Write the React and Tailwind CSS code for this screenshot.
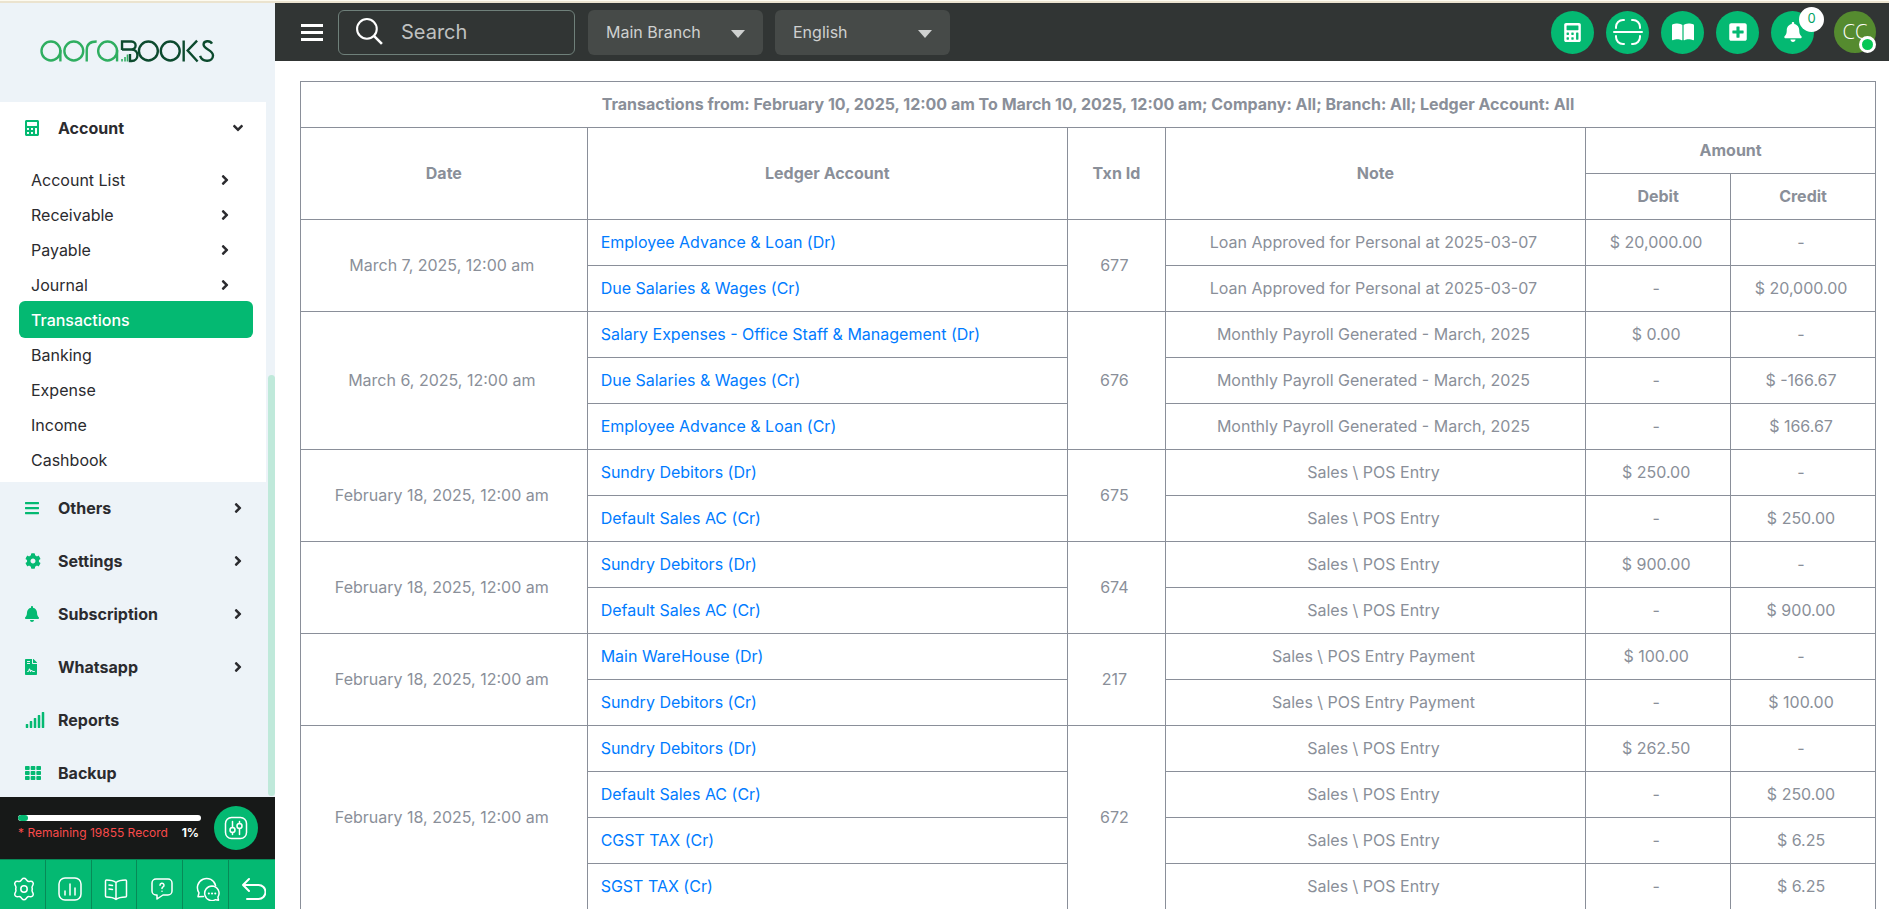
import { useState } from "react";
import {
  FaCalculator,
  FaBars,
  FaCog,
  FaBell,
  FaFileContract,
  FaSignal,
  FaTh,
  FaAngleRight,
  FaAngleDown,
  FaPlusSquare,
} from "react-icons/fa";
import { FaBookOpen } from "react-icons/fa6";

const accountLinks = [
  { label: "Account List", hasChildren: true },
  { label: "Receivable", hasChildren: true },
  { label: "Payable", hasChildren: true },
  { label: "Journal", hasChildren: true },
  { label: "Transactions" },
  { label: "Banking" },
  { label: "Expense" },
  { label: "Income" },
  { label: "Cashbook" },
];

const menuItems = [
  { label: "Others", icon: FaBars, hasChildren: true },
  { label: "Settings", icon: FaCog, hasChildren: true },
  { label: "Subscription", icon: FaBell, hasChildren: true },
  { label: "Whatsapp", icon: FaFileContract, hasChildren: true },
  { label: "Reports", icon: FaSignal, iconSize: 20 },
  { label: "Backup", icon: FaTh },
];

const payroll = "Monthly Payroll Generated - March, 2025";
const loan = "Loan Approved for Personal at 2025-03-07";
const pos = "Sales \\ POS Entry";
const posPayment = "Sales \\ POS Entry Payment";

const transactions = [
  {
    id: "677",
    date: "March 7, 2025, 12:00 am",
    entries: [
      ["Employee Advance & Loan (Dr)", loan, "$ 20,000.00", "-"],
      ["Due Salaries & Wages (Cr)", loan, "-", "$ 20,000.00"],
    ],
  },
  {
    id: "676",
    date: "March 6, 2025, 12:00 am",
    entries: [
      ["Salary Expenses - Office Staff & Management (Dr)", payroll, "$ 0.00", "-"],
      ["Due Salaries & Wages (Cr)", payroll, "-", "$ -166.67"],
      ["Employee Advance & Loan (Cr)", payroll, "-", "$ 166.67"],
    ],
  },
  {
    id: "675",
    date: "February 18, 2025, 12:00 am",
    entries: [
      ["Sundry Debitors (Dr)", pos, "$ 250.00", "-"],
      ["Default Sales AC (Cr)", pos, "-", "$ 250.00"],
    ],
  },
  {
    id: "674",
    date: "February 18, 2025, 12:00 am",
    entries: [
      ["Sundry Debitors (Dr)", pos, "$ 900.00", "-"],
      ["Default Sales AC (Cr)", pos, "-", "$ 900.00"],
    ],
  },
  {
    id: "217",
    date: "February 18, 2025, 12:00 am",
    entries: [
      ["Main WareHouse (Dr)", posPayment, "$ 100.00", "-"],
      ["Sundry Debitors (Cr)", posPayment, "-", "$ 100.00"],
    ],
  },
  {
    id: "672",
    date: "February 18, 2025, 12:00 am",
    entries: [
      ["Sundry Debitors (Dr)", pos, "$ 262.50", "-"],
      ["Default Sales AC (Cr)", pos, "-", "$ 250.00"],
      ["CGST TAX (Cr)", pos, "-", "$ 6.25"],
      ["SGST TAX (Cr)", pos, "-", "$ 6.25"],
    ],
  },
];

const LineIcon = ({ size = 24, children }) => (
  <svg
    width={size}
    height={size}
    viewBox="0 0 24 24"
    fill="none"
    stroke="currentColor"
    strokeWidth="1.5"
    strokeLinecap="round"
    strokeLinejoin="round"
    aria-hidden="true"
  >
    {children}
  </svg>
);

const Logo = () => (
  <svg width="175" height="24" viewBox="0 0 176 24" fill="none" strokeWidth="2.4" role="img" aria-label="aoraBOOKS">
    <g stroke="#2fae60">
      <circle cx="11" cy="12" r="9.5" />
      <path d="M20.500 11v11.500" />
      <circle cx="34" cy="12" r="9.5" />
      <path d="M47 22.500V11c0-5 3-8.500 10-8.500" />
      <circle cx="68" cy="12" r="9.5" />
      <path d="M77.500 11v11.500" />
      <path d="M82.500 20v2.500M85.500 18v4.500M88 15.500v7" strokeWidth="1.6" />
    </g>
    <g stroke="#0c4a2e">
      <path d="M82.500 11V2.500H92c5.500 0 5.500 8 0 8h-9.500M92 10.500c8 0 8 11.500 0 11.500h-1.500v-7" />
      <circle cx="109" cy="12" r="9.5" />
      <circle cx="131" cy="12" r="9.5" />
      <path d="M144.500 1.500v21M158 1.500l-9.500 10 10 11" />
      <path d="M173 4.500c-2-3.500-8.500-3-8.500 1 0 5 9.500 5 9.500 11 0 6.500-10.500 7.500-13 .500" />
    </g>
  </svg>
);

const footerIcons = [
  {
    label: "Settings",
    icon: (
      <LineIcon>
        <path d="M10 2.300a2.500 2.500 0 0 1 4 0l1 1.200c.6.700 1.300 1 2.200.9l1.600-.1a2.400 2.400 0 0 1 2.200 3.500l-.7 1.500c-.4.900-.4 1.700 0 2.500v.400c-.4.800-.4 1.600 0 2.500l.7 1.500a2.400 2.400 0 0 1-2.200 3.500l-1.600-.1c-.9-.1-1.600.2-2.200.9l-1 1.200a2.500 2.500 0 0 1-4 0l-1-1.200c-.6-.7-1.300-1-2.200-.9l-1.600.1A2.400 2.400 0 0 1 3 16.200l.7-1.500c.4-.9.4-1.700 0-2.500v-.400c.4-.8.4-1.600 0-2.500L3 7.800a2.400 2.400 0 0 1 2.200-3.500l1.600.1c.9.1 1.600-.2 2.200-.9z" />
        <circle cx="12" cy="12" r="3.200" />
      </LineIcon>
    ),
  },
  {
    label: "Charts",
    icon: (
      <LineIcon>
        <rect x="1" y="1" width="22" height="22" rx="6" />
        <path d="M7 18v-4M12 18V7M17 18v-7" />
      </LineIcon>
    ),
  },
  {
    label: "Guide",
    icon: (
      <LineIcon>
        <path d="M12 5.500C9.500 3.500 6 3 2.500 3A1 1 0 0 0 1.500 4v15a1 1 0 0 0 1 1c3.500 0 7 .5 9.500 2.500 2.500-2 6-2.500 9.500-2.500a1 1 0 0 0 1-1V4a1 1 0 0 0-1-1c-3.500 0-7 .5-9.500 2.500zM12 5.500v17M5 8l3.500.5M5 12l3.500.5" />
      </LineIcon>
    ),
  },
  {
    label: "Help",
    icon: (
      <LineIcon>
        <path d="M6 2h12a4 4 0 0 1 4 4v8a4 4 0 0 1-4 4h-5l-6 4v-4H6a4 4 0 0 1-4-4V6a4 4 0 0 1 4-4z" />
        <path d="M10 8.200a2 2 0 1 1 3 1.700c-.7.400-1 .8-1 1.500M12 14.200v.1" />
      </LineIcon>
    ),
  },
  {
    label: "Chat",
    icon: (
      <LineIcon>
        <path d="M7.500 19.500 2 19.800l1-4A9.200 9.200 0 1 1 19.600 8.600" />
        <path d="M16 9a7.300 7.300 0 1 0 3.500 13.700l3 .500-.6-3A7.300 7.300 0 0 0 16 9z" />
        <path d="M12.800 16.500h.1M16 16.500h.1M19.200 16.500h.1" strokeWidth="2" />
      </LineIcon>
    ),
  },
  {
    label: "Back",
    icon: (
      <LineIcon>
        <path d="M7 2 1 8l6 6M1 8h15.500a6.700 6.700 0 0 1 0 14H5" strokeWidth="2" />
      </LineIcon>
    ),
  },
];

const MenuItem = ({ icon: Icon, iconSize = 16, label, hasChildren, open, onClick }) => (
  <button
    onClick={onClick}
    className="flex h-[53px] w-full cursor-pointer items-center pr-5 pb-[2px] pl-[25px] text-left font-bold"
  >
    <span className="w-[33px] text-[#04b972]">
      <Icon size={iconSize} preserveAspectRatio="xMinYMid" />
    </span>
    <span className="flex-1">{label}</span>
    {hasChildren && (open ? <FaAngleDown /> : <FaAngleRight />)}
  </button>
);

const SideNav = () => {
  const [open, setOpen] = useState(true);

  return (
    <aside className="flex w-[275px] shrink-0 flex-col bg-[#edf3f8] text-[#2b2b2f]">
      <div className="flex h-[99px] shrink-0 items-start justify-center pt-9 pr-5">
        <Logo />
      </div>

      <div className="relative min-h-0 flex-1 overflow-hidden pr-[9px]">
        <nav>
          <div className="bg-white pb-[6px]">
            <MenuItem icon={FaCalculator} label="Account" hasChildren open={open} onClick={() => setOpen(!open)} />
            {open && (
              <ul className="mt-[6px] pr-[13px] pl-[19px]">
                {accountLinks.map(({ label, hasChildren }) => (
                  <li key={label} className="h-[35px]">
                    <a
                      href="#"
                      className={`flex h-[37px] items-center justify-between rounded-md pr-5 pl-3 ${
                        label === "Transactions" ? "bg-[#04b972] font-medium text-white" : ""
                      }`}
                    >
                      {label}
                      {hasChildren && <FaAngleRight />}
                    </a>
                  </li>
                ))}
              </ul>
            )}
          </div>
          {menuItems.map((item) => (
            <MenuItem key={item.label} {...item} />
          ))}
        </nav>
        {/* Scrollbar thumb */}
        <div className="absolute right-0 bottom-[1px] h-[421px] w-[7px] rounded-full bg-[#bfe9da]" />
      </div>

      {/* Plan usage */}
      <div className="flex h-[62px] shrink-0 items-center gap-[13px] bg-[#171918] pr-[17px] pl-[18px]">
        <div className="flex-1">
          <div className="h-[6px] overflow-hidden rounded-full bg-white">
            <div className="h-full w-[10px] rounded-full bg-[#04b972]" />
          </div>
          <p className="mt-1 flex justify-between pr-[2px] text-xs leading-4 text-[#f84b4b]">
            * Remaining 19855 Record
            <span className="font-bold text-white">1%</span>
          </p>
        </div>
        <button
          aria-label="Usage options"
          className="flex size-11 cursor-pointer items-center justify-center rounded-full bg-[#04b972] text-white"
        >
          <LineIcon>
            <rect x="1.5" y="1.5" width="21" height="21" rx="6" />
            <path d="M8.500 5.500v6M8.500 16.500v2M15.500 5.500v2M15.500 12.500v6" />
            <circle cx="8.500" cy="14" r="2.500" />
            <circle cx="15.500" cy="10" r="2.500" />
          </LineIcon>
        </button>
      </div>

      <div className="grid h-[50px] shrink-0 grid-cols-6 divide-x divide-[#078a57] border-t border-[#078a57] bg-[#04b972] text-white">
        {footerIcons.map(({ label, icon }) => (
          <button key={label} aria-label={label} className="flex cursor-pointer items-center justify-center pt-[9px] pl-1">
            {icon}
          </button>
        ))}
      </div>
    </aside>
  );
};

const HeaderSelect = ({ label, options }) => (
  <div className="relative">
    <select
      aria-label={label}
      className="h-[45px] w-[175px] appearance-none rounded-md bg-[#464a48] pr-10 pl-[18px] text-base text-[#cfd1d0]"
    >
      {options.map((option) => (
        <option key={option}>{option}</option>
      ))}
    </select>
    <svg
      width="14"
      height="8"
      viewBox="0 0 14 8"
      className="pointer-events-none absolute top-5 right-[18px] fill-[#cfd1d0]"
      aria-hidden="true"
    >
      <path d="M0 0h14L7 8z" />
    </svg>
  </div>
);

const RoundButton = ({ label, children }) => (
  <button
    aria-label={label}
    className="relative flex size-[43px] cursor-pointer items-center justify-center rounded-full bg-[#04b972] text-white"
  >
    {children}
  </button>
);

const Header = () => (
  <header className="flex h-[58px] shrink-0 items-center bg-[#313534] pr-[13px] pl-[26px]">
    <button aria-label="Toggle menu" className="flex w-[22px] cursor-pointer flex-col gap-1">
      <span className="h-[3px] bg-white" />
      <span className="h-[3px] bg-white" />
      <span className="h-[3px] bg-white" />
    </button>

    <label className="mr-[13px] ml-[15px] flex h-[45px] w-[237px] items-center gap-[18px] rounded-md border border-[#6f807a] pl-[17px] text-white">
      <svg width="27" height="29" viewBox="0 0 26 28" fill="none" stroke="currentColor" strokeWidth="2" aria-hidden="true">
        <circle cx="10.500" cy="10.500" r="9.500" />
        <path d="m17 17 8 8" strokeWidth="2.500" />
      </svg>
      <input
        type="search"
        aria-label="Search"
        placeholder="Search"
        className="min-w-0 flex-1 bg-transparent text-xl outline-none placeholder:text-[#bfc1c0]"
      />
    </label>

    <div className="flex gap-3">
      <HeaderSelect label="Branch" options={["Main Branch"]} />
      <HeaderSelect label="Language" options={["English"]} />
    </div>

    <div className="ml-auto flex items-center gap-3">
      <RoundButton label="Calculator">
        <FaCalculator size={19} />
      </RoundButton>
      <RoundButton label="Scan">
        <svg width="30" height="26" viewBox="0 0 30 26" fill="none" stroke="currentColor" strokeWidth="2" strokeLinecap="round" aria-hidden="true">
          <path d="M1 13h28M3 9V8a7 7 0 0 1 7-7h1M19 1h1a7 7 0 0 1 7 7v1M3 17v1a7 7 0 0 0 7 7h1M19 25h1a7 7 0 0 0 7-7v-1" />
        </svg>
      </RoundButton>
      <RoundButton label="Ledger">
        <FaBookOpen size={22} />
      </RoundButton>
      <RoundButton label="Add new">
        <FaPlusSquare size={20} />
      </RoundButton>
      <RoundButton label="Notifications">
        <FaBell size={20} />
        <span className="absolute -top-1 -right-[10px] flex size-[25px] items-center justify-center rounded-full bg-white text-[13px] text-[#04a365]">
          0
        </span>
      </RoundButton>
      <button
        aria-label="Profile"
        className="relative ml-2 flex size-[42px] cursor-pointer items-center justify-center rounded-full bg-[#558b2f] font-['Open_Sans'] text-xl font-light text-white"
      >
        CC
        <span className="absolute right-0 bottom-0 size-[17px] rounded-full border-3 border-white bg-[#06c755]" />
      </button>
    </div>
  </header>
);

const TransactionsTable = () => (
  <table className="w-full table-fixed border-collapse text-center text-[#8a8f99] [&_td]:h-[46px] [&_td]:border [&_td]:border-[#8a8f99] [&_td]:pr-1 [&_td]:pb-[2px] [&_th]:h-[46px] [&_th]:border [&_th]:border-[#8a8f99] [&_th]:pb-[2px] [&_th]:font-bold">
    <colgroup>
      <col className="w-[18.2%]" />
      <col className="w-[30.5%]" />
      <col className="w-[6.2%]" />
      <col className="w-[26.7%]" />
      <col className="w-[9.2%]" />
      <col className="w-[9.2%]" />
    </colgroup>
    <thead>
      <tr>
        <th colSpan={6}>
          Transactions from: February 10, 2025, 12:00 am To March 10, 2025, 12:00 am; Company: All; Branch: All; Ledger
          Account: All
        </th>
      </tr>
      <tr>
        <th rowSpan={2}>Date</th>
        <th rowSpan={2}>Ledger Account</th>
        <th rowSpan={2}>Txn Id</th>
        <th rowSpan={2}>Note</th>
        <th colSpan={2}>Amount</th>
      </tr>
      <tr>
        <th>Debit</th>
        <th>Credit</th>
      </tr>
    </thead>
    <tbody>
      {transactions.map(({ id, date, entries }) =>
        entries.map(([account, note, debit, credit], i) => (
          <tr key={`${id}-${i}`}>
            {i === 0 && <td rowSpan={entries.length}>{date}</td>}
            <td className="pl-[13px] text-left">
              <a href="#" className="text-[#007bff]">
                {account}
              </a>
            </td>
            {i === 0 && <td rowSpan={entries.length}>{id}</td>}
            <td>{note}</td>
            <td>{debit}</td>
            <td>{credit}</td>
          </tr>
        )),
      )}
    </tbody>
  </table>
);

const App = () => (
  <div className="flex h-screen flex-col overflow-hidden bg-white font-['Inter',sans-serif] text-base">
    <div className="h-[3px] shrink-0 border-b-2 border-[#ebe3cf] bg-[#fdfaf0]" />
    <div className="flex min-h-0 flex-1">
      <SideNav />
      <div className="flex min-w-0 flex-1 flex-col">
        <Header />
        <main className="min-h-0 flex-1 overflow-hidden pt-5 pr-[13px] pl-[25px]">
          <TransactionsTable />
        </main>
      </div>
    </div>
  </div>
);

export default App;
